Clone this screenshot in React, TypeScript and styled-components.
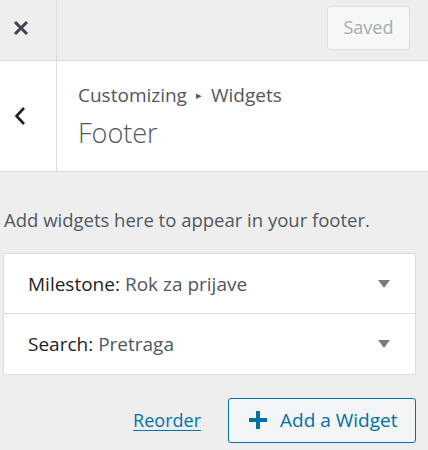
import React from "react";
import styled, { createGlobalStyle } from "styled-components";

const Global = createGlobalStyle`
  html, body { margin: 0; padding: 0; background: #eeeeee; }
  body { font-family: "Open Sans", "Noto Sans", sans-serif; -webkit-font-smoothing: antialiased; }
  * { box-sizing: border-box; }
`;

const Panel = styled.div`
  width: 428px;
  height: 450px;
  background: #eeeeee;
  display: flex;
  flex-direction: column;
  overflow: hidden;
`;

const TopBar = styled.div`
  height: 61px;
  flex-shrink: 0;
  display: flex;
  align-items: center;
  border-bottom: 1px solid #dddddd;
`;

const CloseButton = styled.button`
  width: 57px;
  height: 60px;
  border: 0;
  border-right: 1px solid #dddddd;
  background: transparent;
  display: flex;
  align-items: center;
  justify-content: center;
  padding: 0 15px 5px 0;
  color: #3c434a;
`;

const Spacer = styled.div`
  flex: 1;
`;

const SavedButton = styled.button`
  width: 83px;
  height: 44px;
  margin-right: 18px;
  margin-bottom: 4px;
  border: 1px solid #dcdcde;
  border-radius: 3px;
  background: #f6f7f7;
  color: #a7aaad;
  font-family: inherit;
  font-size: 18px;
  padding: 0 0 2px;
`;

const Header = styled.div`
  height: 111px;
  flex-shrink: 0;
  background: #ffffff;
  border-bottom: 1px solid #dddddd;
  display: flex;
`;

const BackButton = styled.button`
  width: 57px;
  border: 0;
  border-right: 1px solid #dddddd;
  background: transparent;
  display: flex;
  align-items: center;
  justify-content: center;
  padding: 0 17px 0 0;
  color: #1d2327;
`;

const TitleBlock = styled.div`
  padding: 20px 0 0 21px;
  color: #50575e;
`;

const Breadcrumb = styled.div`
  font-size: 19px;
  line-height: 26px;
  display: flex;
  align-items: center;
  gap: 9px;
`;

const Arrow = styled.span`
  font-size: 11px;
  display: inline-block;
  margin-top: 1px;
`;

const PanelTitle = styled.h2`
  margin: 7px 0 0;
  font-size: 27px;
  line-height: 36px;
  font-weight: 300;
`;

const Description = styled.p`
  margin: 35px 0 0 4px;
  font-size: 18.5px;
  line-height: 26px;
  color: #50575e;
`;

const WidgetList = styled.ul`
  list-style: none;
  margin: 20px 12px 0 3px;
  padding: 0;
  border: 1px solid #dcdcde;
  background: #ffffff;
`;

const WidgetRow = styled.li<{ $first?: boolean }>`
  height: ${(p) => (p.$first ? 59 : 61)}px;
  border-top: ${(p) => (p.$first ? "0" : "1px solid #dcdcde")};
  display: flex;
  align-items: center;
  padding: 0 25px 0 24px;
  font-size: 19px;
`;

const WidgetName = styled.span`
  color: #1d2327;
`;

const WidgetInstance = styled.span`
  color: #50575e;
  margin-left: 5px;
`;

const Caret = styled.span`
  margin-left: auto;
  width: 0;
  height: 0;
  border-left: 6px solid transparent;
  border-right: 6px solid transparent;
  border-top: 8px solid #787c82;
`;

const Actions = styled.div`
  margin: 23px 12px 0 0;
  display: flex;
  align-items: center;
  justify-content: flex-end;
  gap: 27px;
`;

const ReorderLink = styled.a`
  color: #0073aa;
  font-size: 18px;
  text-decoration: underline;
  text-underline-offset: 3px;
  margin-bottom: 2px;
`;

const AddButton = styled.button`
  width: 188px;
  height: 45px;
  flex-shrink: 0;
  border: 1px solid #0071a1;
  border-radius: 3px;
  background: #f3f5f6;
  color: #0071a1;
  font-family: inherit;
  font-size: 19px;
  display: flex;
  align-items: center;
  gap: 12px;
  padding: 0 0 2px 19px;
`;

export default function App() {
  return (
    <Panel>
      <Global />
      <TopBar>
        <CloseButton aria-label="Close">
          <svg width="16" height="16" viewBox="0 0 16 16">
            <path d="M2 2 L14 14 M14 2 L2 14" stroke="#3c434a" strokeWidth="3" />
          </svg>
        </CloseButton>
        <Spacer />
        <SavedButton>Saved</SavedButton>
      </TopBar>
      <Header>
        <BackButton aria-label="Back">
          <svg width="12" height="20" viewBox="0 0 12 20">
            <path d="M10 2 L2.5 10 L10 18" fill="none" stroke="#1d2327" strokeWidth="2.6" />
          </svg>
        </BackButton>
        <TitleBlock>
          <Breadcrumb>
            <span>Customizing</span>
            <Arrow>▸</Arrow>
            <span>Widgets</span>
          </Breadcrumb>
          <PanelTitle>Footer</PanelTitle>
        </TitleBlock>
      </Header>
      <Description>Add widgets here to appear in your footer.</Description>
      <WidgetList>
        <WidgetRow $first>
          <WidgetName>Milestone:</WidgetName>
          <WidgetInstance>Rok za prijave</WidgetInstance>
          <Caret />
        </WidgetRow>
        <WidgetRow>
          <WidgetName>Search:</WidgetName>
          <WidgetInstance>Pretraga</WidgetInstance>
          <Caret />
        </WidgetRow>
      </WidgetList>
      <Actions>
        <ReorderLink href="#">Reorder</ReorderLink>
        <AddButton>
          <svg width="20" height="20" viewBox="0 0 20 20">
            <path d="M10 1 V19 M1 10 H19" stroke="#0071a1" strokeWidth="4" />
          </svg>
          Add a Widget
        </AddButton>
      </Actions>
    </Panel>
  );
}
